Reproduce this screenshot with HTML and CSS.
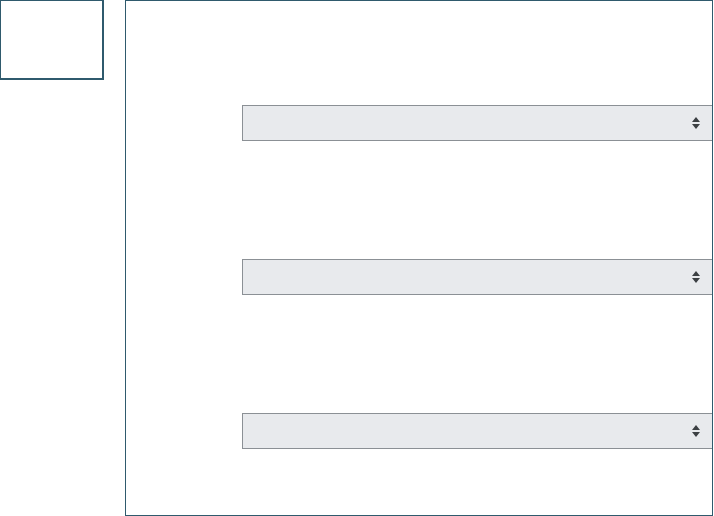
FILE: index.html
```html
<!DOCTYPE html>
<html>
<head>
    <link rel="stylesheet" href="styles.css">
</head>
<body>
    <div class="page">
        <div class="thumb"></div>
        <div class="panel">
            <div class="field">
                <div class="picker">
                    <svg class="arrows" width="8" height="12" viewBox="0 0 8 12"><path d="M4 0L8 5H0Z M4 12L0 7H8Z" fill="#3c4043"/></svg>
                </div>
            </div>
            <div class="field">
                <div class="picker">
                    <svg class="arrows" width="8" height="12" viewBox="0 0 8 12"><path d="M4 0L8 5H0Z M4 12L0 7H8Z" fill="#3c4043"/></svg>
                </div>
            </div>
            <div class="field">
                <div class="picker">
                    <svg class="arrows" width="8" height="12" viewBox="0 0 8 12"><path d="M4 0L8 5H0Z M4 12L0 7H8Z" fill="#3c4043"/></svg>
                </div>
            </div>
        </div>
    </div>
</body>
</html>
```

FILE: styles.css
```css
body {
    margin: 0;
    padding: 0;
    background: #ffffff;
    font-family: "Liberation Sans", Arial, sans-serif;
    overflow: hidden;
}
.page {
    display: flex;
    align-items: flex-start;
    width: 714px;
    height: 516px;
}
.thumb {
    width: 101px;
    height: 77px;
    border: 1px solid #2f5a6d;
    border-width: 1px 2px 2px 1px;
    flex-shrink: 0;
}
.panel {
    margin-left: 21px;
    width: 588px;
    height: 516px;
    border: 1px solid #2f5a6d;
    padding-top: 104px;
    box-sizing: border-box;
    display: flex;
    flex-direction: column;
    gap: 118px;
}
.field {
    padding-left: 116px;
}
.picker {
    height: 34px;
    background: #e8eaed;
    border: 1px solid #8b9095;
    border-right: none;
    display: flex;
    align-items: center;
    justify-content: flex-end;
    padding-right: 12px;
}
.arrows {
    display: block;
}
```
